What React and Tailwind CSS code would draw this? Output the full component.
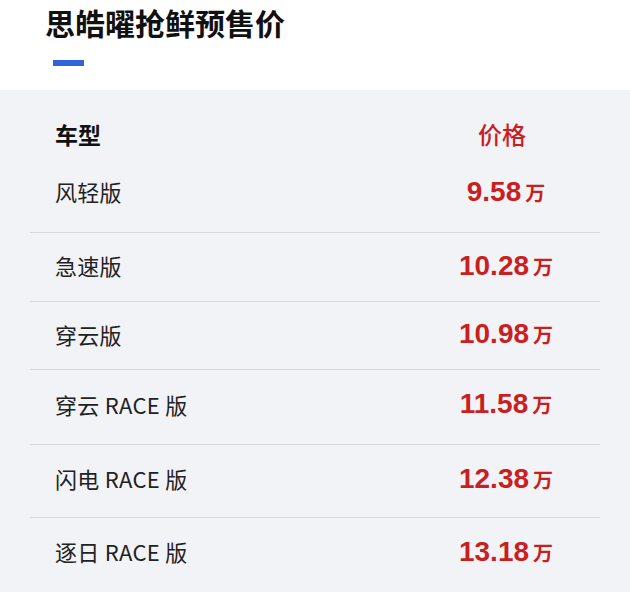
const rows = [
  { name: '风轻版', price: '9.58', h: 'h-[74px] pb-[7px]' },
  { name: '急速版', price: '10.28', h: 'h-[69px] pb-[3px]' },
  { name: '穿云版', price: '10.98', h: 'h-[68px] pb-[3px]' },
  { name: '穿云 RACE 版', price: '11.58', h: 'h-[75px] pb-[6px]' },
  { name: '闪电 RACE 版', price: '12.38', h: 'h-[73px] pb-[5px]' },
  { name: '逐日 RACE 版', price: '13.18', h: 'h-[75px] pb-[7px]' },
]

const cjk = { fontFamily: '"Noto Sans CJK SC", "Noto Sans", sans-serif' }

export default function App() {
  return (
    <div className="w-[630px] h-[592px] overflow-hidden bg-white" style={cjk}>
      <div className="h-[90px] pl-[45px] pt-[1px]">
        <h1 className="text-[30px] leading-[42px] font-bold text-[#111]">思皓曜抢鲜预售价</h1>
        <div className="ml-[8px] mt-[17px] w-[31px] h-[6px] bg-[#3164d9]" />
      </div>

      <div className="bg-[#f2f3f7] h-[502px] px-[30px] pt-[20px]">
        <div className="flex items-center h-[48px]">
          <div className="flex-1 pl-[25px] text-[23px] font-bold text-[#111]">车型</div>
          <div className="w-[188px] text-center text-[24px] font-medium text-[#c91f1f] pr-[8px]">价格</div>
        </div>

        {rows.map((row, i) => (
          <div
            key={i}
            className={`flex items-center ${row.h} ${i > 0 ? 'border-t border-[#d8d9de]' : ''}`}
          >
            <div className="flex-1 pl-[25px] text-[22px] tracking-[0.3px] text-[#222]">{row.name}</div>
            <div className="w-[188px] flex justify-center items-baseline text-[#c91f1f] font-bold">
              <span className="text-[28px]" style={{ fontFamily: '"Liberation Sans", Arial, sans-serif' }}>
                {row.price}
              </span>
              <span className="text-[20px] ml-[4px]">万</span>
            </div>
          </div>
        ))}
      </div>
    </div>
  )
}
